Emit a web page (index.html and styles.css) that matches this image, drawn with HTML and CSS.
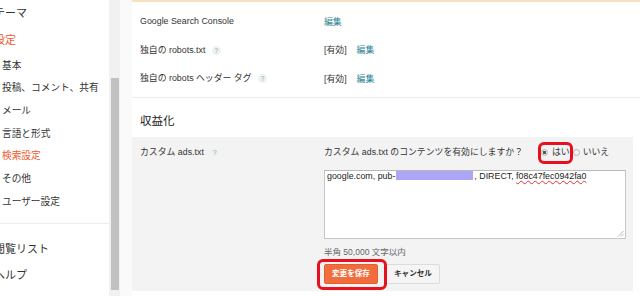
FILE: index.html
```html
<!DOCTYPE html>
<html lang="ja">
<head>
<meta charset="utf-8">
<title>設定 › 検索設定</title>
<link rel="stylesheet" href="styles.css">
</head>
<body>
<div class="app">
  <aside class="sidebar">
    <nav class="nav">
      <div class="nav-top">テーマ</div>
      <div class="nav-top active">設定</div>
      <div class="nav-sub">基本</div>
      <div class="nav-sub">投稿、コメント、共有</div>
      <div class="nav-sub">メール</div>
      <div class="nav-sub">言語と形式</div>
      <div class="nav-sub active">検索設定</div>
      <div class="nav-sub">その他</div>
      <div class="nav-sub">ユーザー設定</div>
      <div class="nav-divider"></div>
      <div class="nav-top">閲覧リスト</div>
      <div class="nav-top">ヘルプ</div>
    </nav>
    <div class="scrollbar"><div class="thumb"></div></div>
  </aside>
  <div class="gutter"></div>
  <main class="main">
    <div class="notice-edge"></div>
    <section class="rows">
      <div class="row">
        <div class="label">Google Search Console</div>
        <div class="value"><a class="link">編集</a></div>
      </div>
      <div class="row">
        <div class="label">独自の robots.txt <span class="help">?</span></div>
        <div class="value"><span class="state">[有効]</span><a class="link">編集</a></div>
      </div>
      <div class="row">
        <div class="label">独自の robots ヘッダー タグ <span class="help">?</span></div>
        <div class="value"><span class="state">[有効]</span><a class="link">編集</a></div>
      </div>
    </section>
    <h2 class="section-title">収益化</h2>
    <section class="panel">
      <div class="label">カスタム ads.txt <span class="help">?</span></div>
      <div class="value">
        <div class="question">
          <span>カスタム ads.txt のコンテンツを有効にしますか？</span>
          <span class="mark mark-radio"><span class="radio checked"></span><span class="radio-label">はい</span></span>
          <span class="radio radio-second"></span><span class="radio-label">いいえ</span>
        </div>
        <div class="textarea">google.com, pub-<span class="redact"></span>, DIRECT, <span class="misspelled">f08c47fec0942fa0</span><svg class="grip" width="7" height="7" viewBox="0 0 7 7"><path d="M1 6.5 L6.5 1 M4 6.5 L6.5 4" stroke="#b5b5b5" stroke-width="1" fill="none"/></svg></div>
        <div class="hint">半角 50,000 文字以内</div>
        <div class="buttons">
          <span class="mark mark-btn"><button class="btn btn-primary">変更を保存</button></span>
          <button class="btn btn-cancel">キャンセル</button>
        </div>
      </div>
    </section>
  </main>
</div>
</body>
</html>
```

FILE: styles.css
```css
html, body {
  margin: 0;
  padding: 0;
  background: #fff;
}
body {
  width: 640px;
  height: 296px;
  overflow: hidden;
  font-family: "Liberation Sans", "Noto Sans CJK JP", sans-serif;
  color: #333;
}
.app {
  display: flex;
  height: 296px;
}
.sidebar {
  display: flex;
  width: 120px;
  flex: none;
}
.nav {
  width: 109px;
  overflow: hidden;
  background: #fff;
}
.nav-top {
  font-size: 11px;
  height: 27.33px;
  line-height: 27.33px;
  margin-left: -6px;
  white-space: nowrap;
  color: #333;
}
.nav-sub {
  font-size: 9.7px;
  height: 22.67px;
  line-height: 22.67px;
  padding-left: 2px;
  white-space: nowrap;
  color: #333;
}
.active {
  color: #f05a2b;
}
.nav-divider {
  height: 1px;
  background: #ececec;
  margin: 9.6px 0 12px;
}
.nav-divider + .nav-top,
.nav-divider + .nav-top + .nav-top {
  height: 26px;
  line-height: 26px;
}
.scrollbar {
  width: 11px;
  background: #f1f1f1;
  padding-top: 78px;
  box-sizing: border-box;
}
.thumb {
  width: 8px;
  height: 212px;
  margin-left: 2px;
  background: #c1c1c1;
}
.gutter {
  width: 12px;
  flex: none;
  background: #fafafa;
}
.main {
  flex: 1;
  background: #fff;
  font-size: 8.85px;
}
.notice-edge {
  height: 2px;
  background: #f5e0bf;
}
.rows {
  padding: 5px 0 4.5px 8px;
  border-bottom: 1px solid #ececec;
}
.row {
  display: grid;
  grid-template-columns: 184px 1fr;
  align-items: center;
  height: 28.5px;
}
.label {
  color: #333;
  white-space: nowrap;
  line-height: 14px;
}
.value {
  color: #333;
}
.link {
  color: #2f8496;
  text-decoration: none;
}
.state {
  margin-right: 10px;
}
.help {
  display: inline-block;
  width: 9px;
  height: 9px;
  line-height: 9px;
  border-radius: 50%;
  background: #eef2f3;
  color: #8aa3aa;
  font-size: 6.5px;
  text-align: center;
  margin-left: 4px;
  vertical-align: 0;
}
.section-title {
  margin: 0;
  font-weight: normal;
  font-size: 11.5px;
  line-height: 14px;
  color: #222;
  padding: 16px 8px 9px;
}
.panel {
  display: grid;
  grid-template-columns: 184px 1fr;
  background: #f3f3f3;
  margin-right: 7px;
  padding: 8px 7px 7px 8px;
}
.question {
  display: flex;
  align-items: center;
  height: 14px;
  line-height: 14px;
  white-space: nowrap;
}
.mark {
  position: relative;
  display: inline-flex;
  align-items: center;
}
.mark::after {
  content: "";
  position: absolute;
  border: 3px solid #e8101e;
  border-radius: 6px;
  pointer-events: none;
}
.mark-radio {
  margin-left: 18px;
  height: 14px;
}
.mark-radio::after {
  left: -3px;
  right: -3px;
  top: -3px;
  bottom: -5px;
}
.radio {
  display: inline-block;
  width: 7px;
  height: 7px;
  box-sizing: border-box;
  border: 1px solid #b4b4b4;
  border-radius: 50%;
  background: #f4f4f4;
  margin-right: 4px;
  position: relative;
}
.radio.checked {
  background: radial-gradient(circle, #555 0 1.4px, #eaeaea 1.8px);
}
.radio-second {
  margin-left: 3px;
  margin-right: 3px;
}
.radio-label {
  color: #333;
}
.textarea {
  position: relative;
  margin-top: 11px;
  height: 69px;
  box-sizing: border-box;
  background: #fff;
  border: 1px solid #c6c6c6;
  border-top-color: #b9b9b9;
  padding: 0 2px;
  line-height: 11px;
  color: #222;
  white-space: nowrap;
}
.redact {
  display: inline-block;
  width: 77px;
  height: 9px;
  margin: 0 1px;
  vertical-align: top;
  background: #aba6f5;
}
.misspelled {
  text-decoration-line: underline;
  text-decoration-style: wavy;
  text-decoration-color: #e0303a;
  text-decoration-thickness: 1px;
  text-underline-offset: 1px;
}
.grip {
  position: absolute;
  right: 1px;
  bottom: 1px;
}
.hint {
  margin-top: 6px;
  line-height: 14px;
  font-size: 8.5px;
  color: #666;
}
.buttons {
  display: flex;
  align-items: center;
  margin-top: 5px;
}
.mark-btn::after {
  left: -7px;
  right: -9px;
  top: -5px;
  bottom: -6px;
}
.btn {
  height: 20px;
  padding: 0 7px;
  font-family: "Liberation Sans", "Noto Sans CJK JP", sans-serif;
  font-size: 7.6px;
  font-weight: bold;
  border: 1px solid #dcdcdc;
  border-radius: 2px;
  background: #f5f5f5;
  color: #333;
  line-height: 18px;
}
.btn-primary {
  background: #f26d3d;
  border-color: #e5602f;
  color: #fff;
}
.btn-cancel {
  margin-left: 8px;
}
```
